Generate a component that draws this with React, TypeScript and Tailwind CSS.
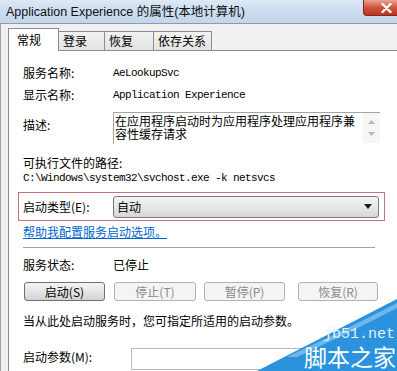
const CJK = { fontFamily: '"Noto Sans CJK SC", "Liberation Sans", sans-serif' };
const MONO = { fontFamily: '"Liberation Mono", "DejaVu Sans Mono", monospace' };

function Btn({ label, w, disabled, ml }: { label: string; w: string; disabled?: boolean; ml: string }) {
  return (
    <div
      className={`${w} ${ml} h-[19px] rounded-[3px] border flex items-center justify-center text-[12px] leading-[14px] ${
        disabled
          ? "border-[#adb2b5] bg-[#f4f4f4] text-[#8a8a8a]"
          : "border-[#707070] bg-gradient-to-b from-[#f4f4f4] via-[#e6e6e6] to-[#d2d2d2] text-black"
      }`}
      style={CJK}
    >
      {label}
    </div>
  );
}

function Tab({ label, active, w }: { label: string; active?: boolean; w: string }) {
  if (active) {
    return (
      <div className={`${w} h-[23px] -mb-px bg-white border border-b-0 border-[#898c95] pl-[8px] pt-[4px] text-[12px] leading-[14px] z-10`}>
        {label}
      </div>
    );
  }
  return (
    <div className={`${w} h-[19px] mt-[3px] -ml-px bg-gradient-to-b from-[#f2f2f2] to-[#e3e3e3] border border-b-0 border-[#898c95] pl-[4px] pt-[2px] text-[12px] leading-[14px]`}>
      {label}
    </div>
  );
}

export default function App() {
  return (
    <div className="w-[397px] h-[371px] overflow-hidden relative bg-[#f0f0f0] text-black flex flex-col" style={CJK}>
      {/* title bar */}
      <div className="h-[24px] shrink-0 relative bg-gradient-to-b from-[#dce9f6] via-[#cbdcee] to-[#c3d7ec] border-b border-[#8d9cac] flex items-center pl-[6px]">
        <span className="text-[12.5px] leading-[14px] text-[#111]" style={{ fontFamily: '"Liberation Sans", "Noto Sans CJK SC", sans-serif' }}>
          Application Experience 的属性(本地计算机)
        </span>
        <div className="absolute right-0 top-0 w-[34px] h-[16px] rounded-bl-[4px] border-l border-b border-[#7a2b22] bg-gradient-to-b from-[#e9a394] via-[#d0533e] to-[#c0321f] flex items-center justify-center pl-[12px]">
          <svg width="11" height="10" viewBox="0 0 11 10">
            <path d="M1.5 1 L9.5 9 M9.5 1 L1.5 9" stroke="#fff" strokeWidth="2.4" strokeLinecap="round" />
          </svg>
        </div>
      </div>

      <div className="flex flex-1">
        <div className="w-[3px] bg-[#cfdeee]" />
        <div className="flex-1 border-l border-[#95a3b2] pl-[7px] pt-[4px] flex flex-col">
          {/* tabs */}
          <div className="flex items-start h-[22px]">
            <Tab label="常规" active w="w-[51px]" />
            <Tab label="登录" w="w-[47px]" />
            <Tab label="恢复" w="w-[50px]" />
            <Tab label="依存关系" w="w-[59px]" />
          </div>

          {/* panel */}
          <div className="w-[420px] flex-1 bg-white border-l border-t border-[#898c95] pl-[14px] pt-[15px] text-[12px] leading-[14px] flex flex-col">
            <div className="flex">
              <div className="w-[90px]">服务名称:</div>
              <div className="text-[11px] tracking-[-0.6px]" style={MONO}>AeLookupSvc</div>
            </div>
            <div className="flex mt-[8px]">
              <div className="w-[90px]">显示名称:</div>
              <div className="text-[11px] tracking-[-0.6px]" style={MONO}>Application Experience</div>
            </div>
            <div className="flex mt-[10px] h-[32px]">
              <div className="w-[90px] pt-[6px]">描述:</div>
              <div className="w-[267px] h-[32px] border-t border-l border-[#a5a5a5] flex">
                <div className="w-[249px] pl-[1px] pt-[1px] leading-[13px] whitespace-nowrap overflow-hidden">
                  在应用程序启动时为应用程序处理应用程序兼
                  <br />
                  容性缓存请求
                </div>
                <div className="w-[17px] h-[30px] bg-[#f6f6f6] flex flex-col items-center justify-around py-[3px]">
                  <svg width="7" height="4" viewBox="0 0 7 4"><path d="M0 4 L3.5 0 L7 4 Z" fill="#b9b9b9" /></svg>
                  <svg width="7" height="4" viewBox="0 0 7 4"><path d="M0 0 L3.5 4 L7 0 Z" fill="#b9b9b9" /></svg>
                </div>
              </div>
            </div>
            <div className="mt-[12px]">可执行文件的路径:</div>
            <div className="mt-[1px] text-[11px] tracking-[-0.6px]" style={MONO}>
              C:\Windows\system32\svchost.exe -k netsvcs
            </div>

            <div className="-ml-[5px] mt-[7px] w-[367px] h-[29px] border border-[#c9707a] pl-[4px] flex items-center">
              <div className="w-[90px]">启动类型(E):</div>
              <div className="w-[266px] h-[22px] rounded-[3px] border border-[#7a7a7a] bg-gradient-to-b from-[#f3f3f3] via-[#e8e8e8] to-[#d6d6d6] flex items-center justify-between pl-[3px] pr-[6px]">
                <span>自动</span>
                <svg width="8" height="5" viewBox="0 0 8 5"><path d="M0 0 L8 0 L4 5 Z" fill="#1a1a1a" /></svg>
              </div>
            </div>

            <div className="mt-[4px] text-[#0066cc] underline">帮助我配置服务启动选项。</div>
            <div className="mt-[8px] w-[352px] h-px bg-[#a0a0a0]" />

            <div className="flex mt-[10px]">
              <div className="w-[90px]">服务状态:</div>
              <div>已停止</div>
            </div>

            <div className="flex mt-[10px]">
              <Btn label="启动(S)" w="w-[81px]" ml="ml-[1px]" />
              <Btn label="停止(T)" w="w-[82px]" ml="ml-[9px]" disabled />
              <Btn label="暂停(P)" w="w-[81px]" ml="ml-[8px]" disabled />
              <Btn label="恢复(R)" w="w-[80px]" ml="ml-[13px]" disabled />
            </div>

            <div className="mt-[13px]">当从此处启动服务时，您可指定所适用的启动参数。</div>

            <div className="flex mt-[20px] items-start">
              <div className="w-[108px] pt-[2px]">启动参数(M):</div>
              <div className="w-[246px] h-[22px] border border-[#b5b8be] bg-white" />
            </div>
          </div>
        </div>
      </div>

      {/* watermark */}
      <div className="absolute right-0 bottom-0 w-[140px] h-[72px]">
        <svg width="140" height="72" viewBox="0 0 140 72" className="absolute inset-0">
          <path d="M0 72 L140 0 L140 72 Z" fill="#2b93dd" />
          <path d="M30 58 Q90 30 140 4 L140 9 Q92 34 40 58 Z" fill="#a8d5f4" opacity="0.55" />
        </svg>
        <div className="absolute right-[2px] top-[28px] text-[15px] leading-[15px] text-[#e4f2fc]" style={MONO}>
          jb51.net
        </div>
        <div className="absolute right-[1px] top-[45px] text-[23px] leading-[25px] text-white" style={CJK}>
          脚本之家
        </div>
      </div>
    </div>
  );
}
